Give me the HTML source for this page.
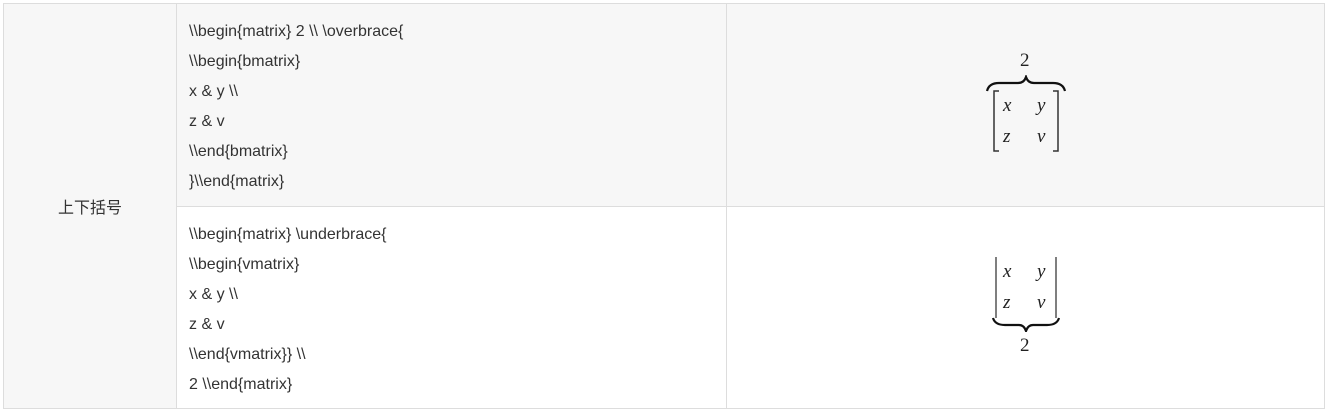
<!DOCTYPE html>
<html><head><meta charset="utf-8"><style>
body{margin:0;width:1333px;height:416px;background:#fff;overflow:hidden;position:relative;font-family:"Liberation Sans","Noto Sans CJK SC",sans-serif;color:#333;font-size:16px}
table{position:absolute;left:3px;top:3px;border-collapse:collapse}
td{border:1px solid #ddd;padding:0;vertical-align:middle}
.c{line-height:30px;padding:12px 12px 8px 12px}
.m{position:absolute;font-family:"Liberation Serif",serif;font-size:19px;color:#222}
.i{font-style:italic}
</style></head><body>
<table>
<tr style="height:203px;background:#f7f7f7">
<td rowspan="2" style="width:172px;text-align:center;background:#f7f7f7">上下括号</td>
<td class="c" style="width:525px">\\begin{matrix} 2 \\ \overbrace{<br>\\begin{bmatrix}<br>x &amp; y \\<br>z &amp; v<br>\\end{bmatrix}<br>}\\end{matrix}</td>
<td style="width:597px"></td></tr>
<tr style="height:202px;background:#fff">
<td class="c">\\begin{matrix} \underbrace{<br>\\begin{vmatrix}<br>x &amp; y \\<br>z &amp; v<br>\\end{vmatrix}} \\<br>2 \\end{matrix}</td>
<td></td></tr>
</table>
<div class="m" style="left:1020px;top:50px">2</div>
<svg style="position:absolute;left:985px;top:75px" width="82" height="82">
<path d="M2 16 Q4 8 14 8 L33 8 Q39 8 41 2 Q43 8 49 8 L68 8 Q78 8 80 16" fill="none" stroke="#111" stroke-width="2.2"/>
<path d="M14 16 L9 16 L9 76 L14 76 M68 16 L73 16 L73 76 L68 76" fill="none" stroke="#333" stroke-width="1.5"/>
</svg>
<div class="m i" style="left:1003px;top:95px">x</div>
<div class="m i" style="left:1037px;top:95px">y</div>
<div class="m i" style="left:1003px;top:126px">z</div>
<div class="m i" style="left:1037px;top:126px">v</div>
<svg style="position:absolute;left:985px;top:254px" width="82" height="78">
<path d="M11 3 L11 64 M71 3 L71 64" fill="none" stroke="#555" stroke-width="1.5"/>
<path d="M8 64 Q10 71 20 71 L34 71 Q39 71 41 77 Q43 71 48 71 L62 71 Q72 71 74 64" fill="none" stroke="#111" stroke-width="2.2"/>
</svg>
<div class="m i" style="left:1003px;top:261px">x</div>
<div class="m i" style="left:1037px;top:261px">y</div>
<div class="m i" style="left:1003px;top:292px">z</div>
<div class="m i" style="left:1037px;top:292px">v</div>
<div class="m" style="left:1020px;top:335px">2</div>
</body></html>
